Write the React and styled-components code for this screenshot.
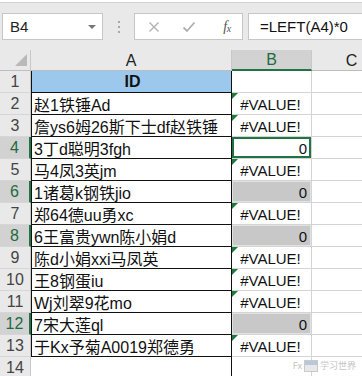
import React from "react";
import styled, { createGlobalStyle, css } from "styled-components";

const GlobalStyle = createGlobalStyle`
  html, body { margin: 0; padding: 0; background: #ffffff; overflow: hidden; }
  * { box-sizing: border-box; }
`;

const FONT = `"Liberation Sans", "Noto Sans CJK SC", Arial, sans-serif`;

const Page = styled.div`
  position: relative;
  width: 362px;
  height: 376px;
  overflow: hidden;
  font-family: ${FONT};
  background: #ffffff;
`;

const Toolbar = styled.div`
  background: #e9e9e9;
  border-top: 1px solid #d2d2d2;
  margin-top: 2px;
  height: 48px;
  display: flex;
  align-items: flex-start;
  padding-top: 10px;
  padding-left: 2px;
`;

const NameBox = styled.div`
  width: 101px;
  height: 27px;
  background: #fff;
  border: 1px solid #c6c6c6;
  display: flex;
  align-items: center;
  justify-content: space-between;
  padding: 0 6px 0 7px;
  font-size: 15px;
  color: #222;
`;

const Caret = styled.span`
  width: 0;
  height: 0;
  border-left: 4px solid transparent;
  border-right: 4px solid transparent;
  border-top: 4px solid #777;
`;

const Separator = styled.div`
  width: 31px;
  height: 27px;
  display: flex;
  flex-direction: column;
  align-items: center;
  justify-content: center;
  gap: 3px;
  & > span {
    width: 2px;
    height: 2px;
    background: #a8a8a8;
  }
`;

const ButtonsBox = styled.div`
  width: 109px;
  height: 27px;
  background: #fff;
  border: 1px solid #c6c6c6;
  display: flex;
  align-items: center;
  padding-left: 12px;
`;

const IconSlot = styled.div`
  width: ${(p) => p.$w}px;
  display: flex;
  align-items: center;
  justify-content: center;
`;

const Fx = styled.span`
  font-family: "Liberation Serif", "DejaVu Serif", serif;
  font-style: italic;
  font-size: 14px;
  color: #555;
  letter-spacing: -0.5px;
  & > sub { font-size: 10px; vertical-align: -1px; }
`;

const FormulaBox = styled.div`
  flex: 1;
  margin-left: 5px;
  height: 27px;
  background: #fff;
  border: 1px solid #c6c6c6;
  border-right: none;
  display: flex;
  align-items: center;
  padding-left: 11px;
  font-size: 15px;
  color: #111;
`;

const Grid = styled.div`
  display: grid;
  grid-template-columns: 31px 201px 80px 80px;
  grid-auto-rows: 22px;
  grid-template-rows: 21px;
  background: #fff;
`;

const headerBg = "#e9e9e9";

const ColHeader = styled.div`
  background: ${(p) => (p.$sel ? "#d2d2d2" : headerBg)};
  color: ${(p) => (p.$sel ? "#1d6b41" : "#222")};
  border-right: 1px solid #c8c8c8;
  border-bottom: ${(p) => (p.$sel ? "2px solid #217346" : "1px solid #bdbdbd")};
  font-size: 16px;
  display: flex;
  align-items: center;
  justify-content: center;
  padding-top: 1px;
  overflow: hidden;
  white-space: nowrap;
`;

const Corner = styled(ColHeader)`
  justify-content: flex-end;
  align-items: flex-end;
  padding: 0 3px 4px 0;
`;

const RowHeader = styled.div`
  background: ${(p) => (p.$sel ? "#d2d2d2" : headerBg)};
  color: ${(p) => (p.$sel ? "#1d6b41" : "#444")};
  border-bottom: 1px solid #d6d6d6;
  border-right: ${(p) => (p.$sel ? "2px solid #217346" : "1px solid #c8c8c8")};
  font-size: 16px;
  display: flex;
  align-items: center;
  justify-content: center;
  padding-top: 1px;
`;

const TextCell = styled.div`
  background: ${(p) => (p.$head ? "#9dc8ee" : "#fff")};
  border-left: 1px solid #111;
  border-right: 1px solid #111;
  border-bottom: 1px solid #111;
  font-size: 16px;
  font-weight: ${(p) => (p.$head ? 700 : 400)};
  color: #111;
  display: flex;
  align-items: center;
  justify-content: ${(p) => (p.$head ? "center" : "flex-start")};
  padding: 1px 0 0 2px;
  white-space: nowrap;
  overflow: hidden;
  ${(p) =>
    p.$empty &&
    css`
      border-left: none;
      border-right: 1px solid #111;
      border-bottom: 1px solid #d4d4d4;
      background: #fff;
    `}
`;

const ValueCell = styled.div`
  position: relative;
  background: #fff;
  border-right: 1px solid #d4d4d4;
  border-bottom: 1px solid #d4d4d4;
  font-size: 15px;
  color: #111;
  display: flex;
  align-items: center;
  justify-content: ${(p) => (p.$error ? "center" : "flex-end")};
  padding: 1px 4px 0 2px;
  white-space: nowrap;
  ${(p) =>
    p.$sel &&
    css`
      background: #c8c8c8;
      box-shadow: inset 0 0 0 1px #e2e2e2;
    `}
  ${(p) =>
    p.$active &&
    css`
      box-shadow: inset 0 0 0 2px #217346;
    `}
  ${(p) =>
    p.$error &&
    css`
      &::before {
        content: "";
        position: absolute;
        left: 0;
        top: 0;
        width: 0;
        height: 0;
        border-top: 6px solid #1e7b3a;
        border-right: 6px solid transparent;
      }
    `}
`;

const EmptyCell = styled.div`
  background: #fff;
  border-right: 1px solid #d4d4d4;
  border-bottom: 1px solid #d4d4d4;
`;

const Watermark = styled.div`
  position: absolute;
  right: 6px;
  bottom: 4px;
  display: flex;
  align-items: center;
  gap: 2px;
  font-size: 9px;
  color: #c4c4c4;
  font-family: "Noto Sans CJK SC", sans-serif;
`;

const WmIcon = styled.span`
  width: 14px;
  height: 12px;
  border: 1px solid #c9c9c9;
  background: linear-gradient(#b8c8dc 0 40%, #e8e8e8 40%);
`;

const rows = [
  { a: "ID", head: true },
  { a: "赵1铁锤Ad", b: "#VALUE!" },
  { a: "詹ys6姆26斯下士df赵铁锤", b: "#VALUE!" },
  { a: "3丁d聪明3fgh", b: "0", active: true },
  { a: "马4凤3英jm", b: "#VALUE!" },
  { a: "1诸葛k钢铁jio", b: "0", sel: true },
  { a: "郑64德uu勇xc", b: "#VALUE!" },
  { a: "6王富贵ywn陈小娟d", b: "0", sel: true },
  { a: "陈d小娟xxi马凤英", b: "#VALUE!" },
  { a: "王8钢蛋iu", b: "#VALUE!" },
  { a: "Wj刘翠9花mo", b: "#VALUE!" },
  { a: "7宋大莲ql", b: "0", sel: true },
  { a: "于Kx予菊A0019郑德勇", b: "#VALUE!" },
  { empty: true },
];

export default function App() {
  return (
    <>
      <GlobalStyle />
      <Page>
        <Toolbar>
          <NameBox>
            <span>B4</span>
            <Caret />
          </NameBox>
          <Separator>
            <span />
            <span />
            <span />
          </Separator>
          <ButtonsBox>
            <IconSlot $w={14}>
              <svg width="12" height="12" viewBox="0 0 12 12">
                <path d="M1.5 1.5 L10.5 10.5 M10.5 1.5 L1.5 10.5" stroke="#b0b0b0" strokeWidth="1.4" fill="none" />
              </svg>
            </IconSlot>
            <IconSlot $w={56}>
              <svg width="14" height="12" viewBox="0 0 14 12">
                <path d="M1.5 6.5 L5 10 L12.5 1.5" stroke="#b0b0b0" strokeWidth="1.8" fill="none" />
              </svg>
            </IconSlot>
            <IconSlot $w={20}>
              <Fx>
                f<sub>x</sub>
              </Fx>
            </IconSlot>
          </ButtonsBox>
          <FormulaBox>=LEFT(A4)*0</FormulaBox>
        </Toolbar>
        <Grid>
          <Corner>
            <svg width="12" height="12" viewBox="0 0 12 12">
              <polygon points="12,0 12,12 0,12" fill="#b9b9b9" />
            </svg>
          </Corner>
          <ColHeader>A</ColHeader>
          <ColHeader $sel>B</ColHeader>
          <ColHeader>C</ColHeader>
          {rows.map((r, i) => {
            const n = i + 1;
            const sel = r.active || r.sel;
            return (
              <React.Fragment key={n}>
                <RowHeader $sel={sel}>{n}</RowHeader>
                {r.empty ? (
                  <TextCell $empty />
                ) : (
                  <TextCell $head={r.head}>{r.a}</TextCell>
                )}
                {r.b !== undefined ? (
                  <ValueCell
                    $error={r.b.startsWith("#")}
                    $sel={r.sel}
                    $active={r.active}
                  >
                    {r.b}
                  </ValueCell>
                ) : (
                  <EmptyCell />
                )}
                <EmptyCell />
              </React.Fragment>
            );
          })}
        </Grid>
        <Watermark>
          <span>Fx</span>
          <WmIcon />
          <span>学习世界</span>
        </Watermark>
      </Page>
    </>
  );
}
